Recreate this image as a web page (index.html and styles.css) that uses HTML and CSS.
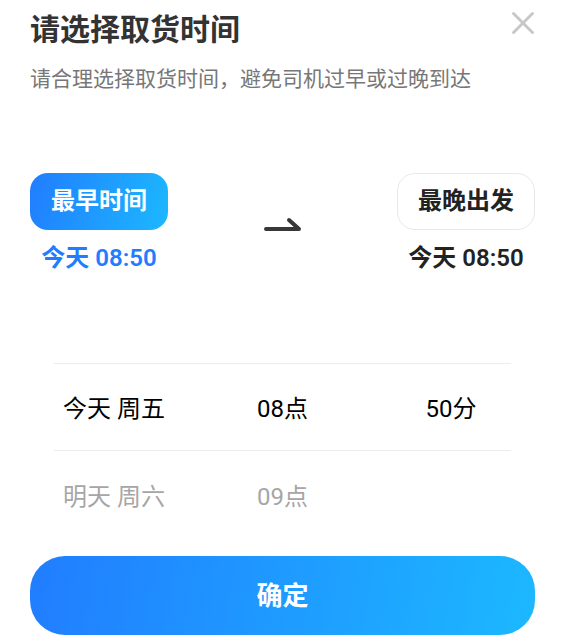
FILE: index.html
```html
<!DOCTYPE html>
<html lang="zh-CN">
<head>
<meta charset="utf-8">
<meta name="viewport" content="width=device-width, initial-scale=1">
<title>请选择取货时间</title>
<link rel="stylesheet" href="styles.css">
</head>
<body>
<main class="sheet">
  <header class="header">
    <div>
      <h1 class="title">请选择取货时间</h1>
      <p class="subtitle">请合理选择取货时间，避免司机过早或过晚到达</p>
    </div>
    <button class="close" type="button" aria-label="关闭">
      <svg viewBox="0 0 24 24" width="24" height="24" fill="none" stroke="currentColor" stroke-width="3" stroke-linecap="round"><path d="M2.5 2.5 21.500 21.500M21.500 2.500 2.500 21.500"/></svg>
    </button>
  </header>
  <section class="range">
    <div class="bound bound-active">
      <button class="tab" type="button">最早时间</button>
      <span class="time">今天 08:50</span>
    </div>
    <svg class="arrow" viewBox="0 0 38 16" width="38" height="16" fill="none" stroke="currentColor" stroke-width="4" stroke-linecap="round" stroke-linejoin="round"><path d="M2 12H35L25 3"/></svg>
    <div class="bound">
      <button class="tab" type="button">最晚出发</button>
      <span class="time">今天 08:50</span>
    </div>
  </section>
  <section class="picker">
    <div class="row row-current"><span>今天 周五</span><span>08点</span><span>50分</span></div>
    <div class="row row-next"><span>明天 周六</span><span>09点</span></div>
  </section>
  <button class="confirm" type="button">确定</button>
</main>
</body>
</html>
```
FILE: styles.css
```css
* { box-sizing: border-box; }
body {
  margin: 0;
  background: #fff;
  color: #222;
  font-family: Roboto, "Noto Sans CJK SC", sans-serif;
}
button { font: inherit; cursor: pointer; }
.sheet { padding: 8px 30px; }
.header { display: flex; justify-content: space-between; align-items: flex-start; }
.title { margin: 0; font-size: 30px; line-height: 44px; font-weight: 700; color: #333; }
.subtitle { margin: 11px 0 0; font-size: 21px; line-height: 32px; color: #777; }
.close { display: flex; margin-top: 3px; padding: 0; border: 0; background: none; color: #c8c8c8; }
.range { display: flex; justify-content: space-between; align-items: center; margin-top: 78px; }
.bound { display: flex; flex-direction: column; align-items: center; font-size: 24px; font-weight: 600; }
.tab {
  height: 57px;
  padding: 0 20px 6px;
  border: 1px solid #e8e8e8;
  border-radius: 18px;
  background: #fff;
  color: #222;
}
.time { margin-top: 10px; line-height: 36px; }
.bound-active { color: #217dff; }
.bound-active .tab { border: 0; padding: 0 21px 6px; background: linear-gradient(105deg, #217dff, #1cb8ff); color: #fff; }
.arrow { color: #383838; }
.picker { margin: 87px 24px 0; font-size: 24px; }
.row { display: grid; grid-template-columns: 120px 1fr 120px; align-items: center; text-align: center; height: 88px; padding-bottom: 2px; }
.row-current { border: solid #ececf0; border-width: 1px 0; color: #000; }
.row-next { color: #a6a6a6; }
.confirm {
  display: block;
  width: 100%;
  height: 79px;
  margin-top: 17px;
  padding: 0 0 4px;
  border: 0;
  border-radius: 35px;
  background: linear-gradient(100deg, #217dff, #1cb8ff);
  color: #fff;
  font-size: 26px;
  font-weight: 700;
}
```
